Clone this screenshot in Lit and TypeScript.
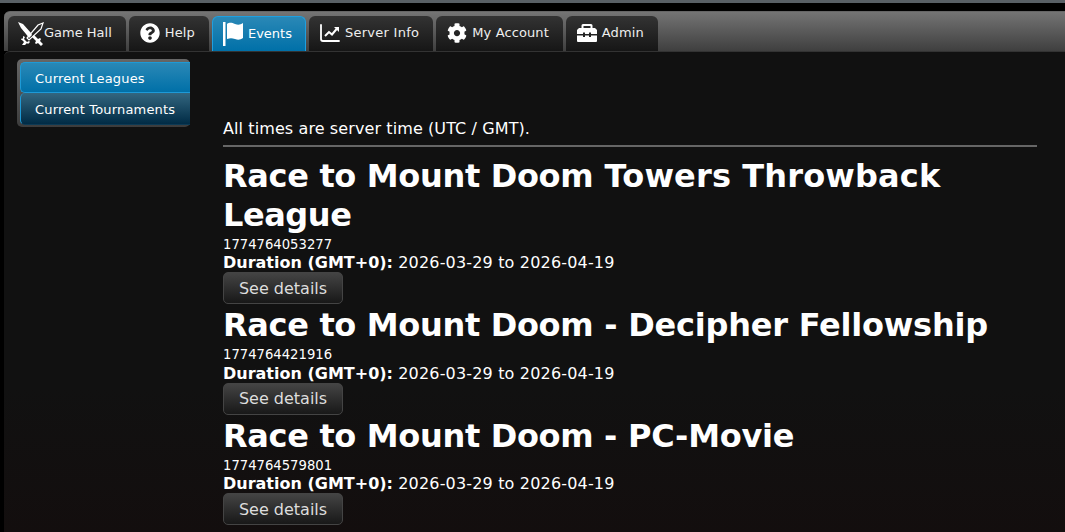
import { LitElement, html, css } from 'lit';
import { customElement } from 'lit/decorators.js';

const ICONS: Record<string, unknown> = {
  swords: html`<svg class="ic low" viewBox="0 0 26 24" width="26" height="24">
    <path fill="#fff" d="M0 0l5 2 8 9 1 2-3 3-3-4-5-6z"/>
    <path fill="#fff" d="M14 15l2-2 4 4 2-1 1 1-1 2 3 3-2 2-3-3-2 1-1-1 1-2z"/>
    <path fill="none" stroke="#fff" stroke-width="1.2" d="M25 1l-2 6-12 11-2-2L20 3z"/>
    <path fill="#fff" d="M5 14l2 1-1 2 3 3 2-1 1 1-2 2-1-1-2 2-3 0 2-3-2-2-1 0 1-2 1 1z"/>
  </svg>`,
  help: html`<svg class="ic" viewBox="0 0 512 512" width="20" height="20"><path fill="#fff" d="M504 256c0 136.997-111.043 248-248 248S8 392.997 8 256C8 119.083 119.043 8 256 8s248 111.083 248 248zM262.655 90c-54.497 0-89.255 22.957-116.549 63.758-3.536 5.286-2.353 12.415 2.715 16.258l34.699 26.31c5.205 3.947 12.621 3.008 16.665-2.122 17.864-22.658 30.113-35.797 57.303-35.797 20.429 0 45.698 13.148 45.698 32.958 0 14.976-12.363 22.667-32.534 33.976C247.128 238.528 216 254.941 216 296v4c0 6.627 5.373 12 12 12h56c6.627 0 12-5.373 12-12v-1.333c0-28.462 83.186-29.647 83.186-106.667 0-58.002-60.165-102-116.531-102zM256 338c-25.365 0-46 20.635-46 46 0 25.364 20.635 46 46 46s46-20.636 46-46c0-25.365-20.635-46-46-46z"/></svg>`,
  flag: html`<svg class="ic low" viewBox="0 0 20 24" width="20" height="24"><path fill="#fff" d="M0 0h2.500v24H0z"/><path fill="#fff" d="M4 2c3-2 5-1 8 0s5 1 8-1v15c-3 2-5 2-8 1s-5-1-8 0z"/></svg>`,
  chart: html`<svg class="ic" viewBox="0 0 20 18" width="20" height="18"><path fill="none" stroke="#fff" stroke-width="1.800" stroke-linecap="round" stroke-linejoin="round" d="M1 1v14q0 2 2 2h16"/><path fill="none" stroke="#fff" stroke-width="2" d="M5 12l4-4 3 2.500 5-6"/><path fill="#fff" d="M14 3h5v5z"/></svg>`,
  cog: html`<svg class="ic" viewBox="0 0 512 512" width="20" height="20"><path fill="#fff" d="M487.4 315.7l-42.6-24.6c4.3-23.2 4.3-47 0-70.2l42.6-24.6c4.9-2.8 7.1-8.6 5.5-14-11.1-35.6-30-67.8-54.7-94.6-3.8-4.1-10-5.1-14.8-2.3L380.8 110c-17.9-15.4-38.5-27.3-60.8-35.1V25.8c0-5.6-3.9-10.5-9.4-11.7-36.7-8.2-74.3-7.8-109.2 0-5.5 1.2-9.4 6.1-9.4 11.7V75c-22.2 7.900-42.8 19.8-60.8 35.1L88.700 85.500c-4.900-2.800-11-1.900-14.800 2.300-24.700 26.700-43.600 58.900-54.700 94.600-1.700 5.400.600 11.200 5.500 14L67.300 221c-4.300 23.200-4.300 47 0 70.200l-42.600 24.600c-4.900 2.800-7.100 8.600-5.500 14 11.100 35.600 30 67.800 54.700 94.600 3.800 4.100 10 5.100 14.800 2.300l42.600-24.600c17.900 15.400 38.500 27.300 60.800 35.100v49.200c0 5.600 3.900 10.500 9.400 11.700 36.700 8.200 74.300 7.800 109.200 0 5.500-1.200 9.400-6.100 9.400-11.700v-49.200c22.200-7.900 42.800-19.800 60.800-35.100l42.600 24.600c4.900 2.800 11 1.900 14.800-2.300 24.700-26.700 43.600-58.900 54.700-94.600 1.500-5.500-.7-11.300-5.600-14.100zM256 336c-44.100 0-80-35.900-80-80s35.900-80 80-80 80 35.900 80 80-35.900 80-80 80z"/></svg>`,
  toolbox: html`<svg class="ic" viewBox="0 0 20 18" width="20" height="18"><path fill="#fff" d="M6 0h8q1.500 0 1.500 1.500V4H18l2 2v4h-6V8.500h-2V10H8V8.500H6V10H0V6l2-2h2.500V1.500Q4.500 0 6 0zm.5 2v2h7V2z"/><path fill="#fff" d="M0 11.500h6V13h2v-1.500h4V13h2v-1.500h6V17q0 1-1 1H1q-1 0-1-1z"/></svg>`,
};

// track: per-label letter spacing, the reference font runs a little wider than DejaVu
const TABS = [
  { label: 'Game Hall', icon: 'swords', track: 0 },
  { label: 'Help', icon: 'help', track: 0.12 },
  { label: 'Events', icon: 'flag', track: 0, active: true },
  { label: 'Server Info', icon: 'chart', track: 0.27 },
  { label: 'My Account', icon: 'cog', track: 0.1 },
  { label: 'Admin', icon: 'toolbox', track: 0.1 },
];

const EVENTS: { parts: [string, number][]; id: string }[] = [
  {
    parts: [['Race to Mount Doom', -0.33], [' Towers Throwback', 0.15], [' League', -0.45]],
    id: '1774764053277',
  },
  {
    parts: [['Race to Mount Doom', -0.33], [' - Decipher Fellowship', -0.22]],
    id: '1774764421916',
  },
  {
    parts: [['Race to Mount Doom', -0.33], [' - PC-Movie', -0.27]],
    id: '1774764579801',
  },
];

@customElement('app-root')
export class AppRoot extends LitElement {
  static styles = css`
    :host {
      display: block;
      height: 532px;
      overflow: hidden;
      background: #000;
      color: #fff;
      font-family: "DejaVu Sans", sans-serif;
      font-size: 16px;
    }
    .topline {
      height: 3px;
      background: #596066;
    }
    .shell {
      margin: 8px 0 0 4px;
    }
    .tabbar {
      display: flex;
      gap: 3px;
      height: 40px;
      padding: 4px 0 0 4px;
      box-sizing: border-box;
      border-radius: 6px 0 0 0;
      background: linear-gradient(#747474, #3f3f3f);
      border-top: 1px solid #666;
    }
    .tab {
      display: flex;
      align-items: center;
      gap: 5px;
      box-sizing: border-box;
      height: 35px;
      padding: 0 14px 2px 11px;
      border-radius: 6px 6px 0 0;
      background: linear-gradient(#333, #161616);
      font-size: 13px;
      color: #eee;
    }
    .tab.swords-tab {
      padding-left: 10px;
      gap: 0;
    }
    .tab.active {
      padding: 0 13px 2px 10px;
      background: linear-gradient(#2a88b6, #0070a8);
      border: 1px solid #1ea0e0;
      border-bottom: none;
      color: #fff;
    }
    .ic {
      flex: none;
    }
    .ic.low {
      margin-top: 2px;
    }
    .panel {
      display: flex;
      align-items: flex-start;
      height: 481px;
      border-radius: 6px 0 0 0;
      border-top: 1px solid #333;
      background: linear-gradient(#111 70%, #130e0e);
    }
    .side {
      flex: none;
      width: 170px;
      margin: 7px 0 0 13px;
      padding: 3px 0 2px 3px;
      border-radius: 5px;
      background: linear-gradient(#666, #3c3c3c);
    }
    .side a {
      display: flex;
      align-items: center;
      box-sizing: border-box;
      height: 31px;
      padding: 2px 0 0 14px;
      font-size: 13px;
      letter-spacing: 0.17px;
      border: 1px solid #1e9ad6;
      border-right: none;
      background: linear-gradient(#2a88b6, #0070a8);
    }
    .side a:first-child {
      border-radius: 5px 0 0 5px;
    }
    .side a.off {
      height: 32px;
      border-top: none;
      border-bottom-color: #0d3a55;
      border-radius: 5px 0 0 5px;
      background: linear-gradient(#33667f, #002b45);
    }
    .main {
      flex: 1;
      margin: 67px 28px 0 33px;
      min-width: 0;
    }
    .note {
      line-height: 19px;
      letter-spacing: 0.1px;
    }
    hr {
      height: 2px;
      margin: 7px 0 10px;
      border: none;
      background: #666;
    }
    h1 {
      margin: 0;
      font-size: 32px;
      line-height: 38.9px;
      font-weight: bold;
    }
    .event {
      padding-bottom: 2px;
    }
    .id {
      margin-top: 2px;
      font-size: 13.2px;
      line-height: 16.2px;
    }
    .dur {
      line-height: 19.4px;
      letter-spacing: 0.17px;
    }
    .dur b {
      letter-spacing: 0;
    }
    .btn {
      display: block;
      box-sizing: border-box;
      width: 120px;
      height: 32px;
      border: 1px solid #444;
      border-radius: 5px;
      background: linear-gradient(#444, #181818);
      color: #ddd;
      font: 16px "DejaVu Sans", sans-serif;
    }
  `;

  render() {
    return html`
      <div class="topline"></div>
      <div class="shell">
        <nav class="tabbar">
          ${TABS.map(
            (t) => html`<div class="tab ${t.active ? 'active' : ''} ${t.icon === 'swords' ? 'swords-tab' : ''}">
              ${ICONS[t.icon]}<span style="letter-spacing:${t.track}px">${t.label}</span>
            </div>`
          )}
        </nav>
        <div class="panel">
          <div class="side">
            <a>Current Leagues</a>
            <a class="off">Current Tournaments</a>
          </div>
          <div class="main">
            <div class="note">All times are server time (UTC / GMT).</div>
            <hr />
            ${EVENTS.map(
              (e) => html`<div class="event">
                <h1>${e.parts.map(([text, track]) => html`<span style="letter-spacing:${track}px">${text}</span>`)}</h1>
                <div class="id">${e.id}</div>
                <div class="dur"><b>Duration (GMT+0):</b> 2026-03-29 to 2026-04-19</div>
                <button class="btn">See details</button>
              </div>`
            )}
          </div>
        </div>
      </div>
    `;
  }
}
